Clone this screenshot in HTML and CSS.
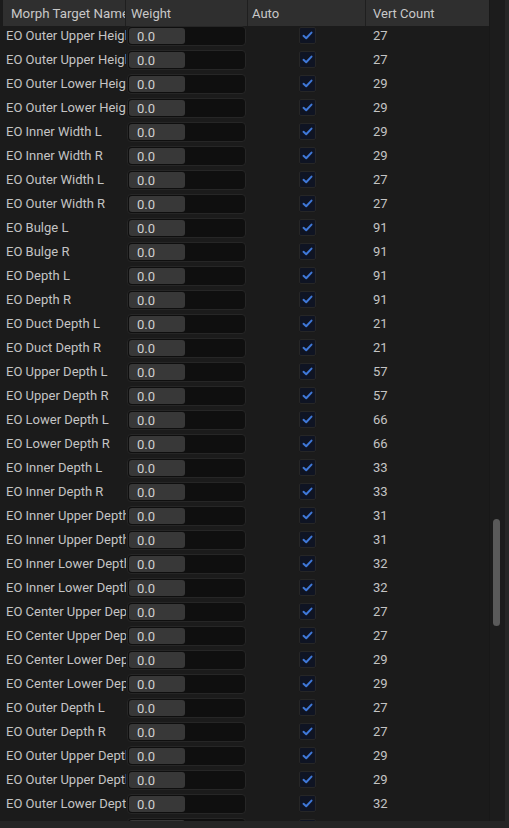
FILE: index.html
```html
<!DOCTYPE html>
<html lang="en">
<head>
    <meta charset="UTF-8">
    <meta name="viewport" content="width=device-width, initial-scale=1.0">
    <title>Morph Targets</title>
    <link rel="stylesheet" href="styles.css">
</head>
<body>
    <div class="panel">
        <div class="table">
            <div class="header">
                <div class="col col-name">Morph Target Name</div>
                <div class="col col-weight">Weight</div>
                <div class="col col-auto">Auto</div>
                <div class="col col-count">Vert Count</div>
            </div>
            <div class="rows" id="rows"></div>
        </div>
        <div class="track">
            <div class="thumb"></div>
        </div>
    </div>
    <script>
        const targets = [
            ['EO Outer Upper Height L', 27],
            ['EO Outer Upper Height R', 27],
            ['EO Outer Lower Height L', 29],
            ['EO Outer Lower Height R', 29],
            ['EO Inner Width L', 29],
            ['EO Inner Width R', 29],
            ['EO Outer Width L', 27],
            ['EO Outer Width R', 27],
            ['EO Bulge L', 91],
            ['EO Bulge R', 91],
            ['EO Depth L', 91],
            ['EO Depth R', 91],
            ['EO Duct Depth L', 21],
            ['EO Duct Depth R', 21],
            ['EO Upper Depth L', 57],
            ['EO Upper Depth R', 57],
            ['EO Lower Depth L', 66],
            ['EO Lower Depth R', 66],
            ['EO Inner Depth L', 33],
            ['EO Inner Depth R', 33],
            ['EO Inner Upper Depth L', 31],
            ['EO Inner Upper Depth R', 31],
            ['EO Inner Lower Depth L', 32],
            ['EO Inner Lower Depth R', 32],
            ['EO Center Upper Depth L', 27],
            ['EO Center Upper Depth R', 27],
            ['EO Center Lower Depth L', 29],
            ['EO Center Lower Depth R', 29],
            ['EO Outer Depth L', 27],
            ['EO Outer Depth R', 27],
            ['EO Outer Upper Depth L', 29],
            ['EO Outer Upper Depth R', 29],
            ['EO Outer Lower Depth L', 32],
            ['EO Outer Lower Depth R', 32]
        ];

        const rows = document.getElementById('rows');
        targets.forEach(function(t) {
            const row = document.createElement('div');
            row.className = 'row';
            row.innerHTML = `
                <div class="name">${t[0]}</div>
                <div class="weight">
                    <div class="field"><div class="fill">0.0</div></div>
                </div>
                <div class="auto">
                    <span class="check">
                        <svg width="11" height="9" viewBox="0 0 11 9"><path d="M1.5 4.8 L4.2 7.2 L9.5 1.6" fill="none" stroke="#3f78d8" stroke-width="2" stroke-linecap="round" stroke-linejoin="round"/></svg>
                    </span>
                </div>
                <div class="count">${t[1]}</div>
            `;
            rows.appendChild(row);
        });
    </script>
</body>
</html>
```

FILE: styles.css
```css
* {
    margin: 0;
    padding: 0;
    box-sizing: border-box;
}
body {
    font-family: Roboto, "Liberation Sans", sans-serif;
    font-size: 13px;
    color: #c4c4c4;
    background-color: #1b1b1b;
}
.panel {
    display: flex;
    width: 509px;
    height: 828px;
    overflow: hidden;
    background-color: #1b1b1b;
    border-right: 4px solid #262626;
    border-bottom: 7px solid #252525;
}
.table {
    width: 489px;
    flex-shrink: 0;
}
.header {
    display: flex;
    height: 26px;
    margin-left: 3px;
    background-color: #2f2f2f;
}
.col {
    line-height: 27px;
    color: #c8c8c8;
    white-space: nowrap;
    overflow: hidden;
    border-right: 1px solid #1f1f1f;
}
.col-name {
    width: 123px;
    padding-left: 8px;
    font-size: 13.3px;
}
.col-weight {
    width: 122px;
    padding-left: 5px;
}
.col-auto {
    width: 118px;
    padding-left: 4px;
}
.col-count {
    width: 123px;
    padding-left: 7px;
    border-right: none;
}
.row {
    display: flex;
    height: 24px;
}
.name {
    width: 126px;
    padding-left: 6px;
    line-height: 20px;
    white-space: nowrap;
    overflow: hidden;
}
.weight {
    width: 122px;
    padding-left: 1px;
}
.field {
    width: 119px;
    height: 20px;
    padding: 1px;
    background-color: #0f0f0f;
    border: 1px solid #262626;
    border-radius: 4px;
}
.fill {
    width: 56px;
    height: 100%;
    padding-left: 8px;
    line-height: 17px;
    color: #d0d0d0;
    background-color: #383838;
    border-radius: 3px;
}
.auto {
    width: 118px;
    display: flex;
    justify-content: center;
}
.check {
    display: flex;
    align-items: center;
    justify-content: center;
    width: 17px;
    height: 17px;
    margin-top: 1px;
    background-color: #0f1423;
    border: 1px solid #262626;
    border-radius: 2px;
}
.count {
    width: 123px;
    padding-left: 7px;
    line-height: 20px;
}
.track {
    position: relative;
    flex: 1;
    background-color: #1c1c1c;
    border-left: 1px solid #181818;
}
.thumb {
    position: absolute;
    left: 3px;
    top: 519px;
    width: 7px;
    height: 107px;
    background-color: #5a5a5a;
    border-radius: 4px;
}
```
